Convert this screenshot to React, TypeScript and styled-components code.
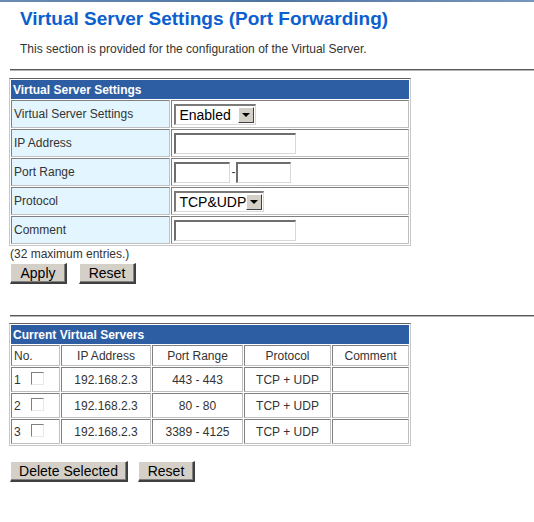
import React from "react";
import styled, { createGlobalStyle } from "styled-components";

const Global = createGlobalStyle`
  html, body { margin: 0; padding: 0; background: #fff; }
  body { font-family: "Liberation Sans", Arial, sans-serif; font-size: 12px; color: #333; }
`;

const TopStrip = styled.div`
  height: 2px;
  background: linear-gradient(90deg, #6a8cb4, #4f74a2 50%, #7896bb);
`;

const Page = styled.div`
  padding: 0 0 0 10px;
`;

const Title = styled.h1`
  margin: 6px 0 0 10px;
  font-size: 19px;
  line-height: 22px;
  font-weight: bold;
  color: #0b5fcf;
`;

const Intro = styled.p`
  margin: 12px 0 0 10px;
  font-size: 12px;
  line-height: 14px;
  color: #333;
`;

const Rule = styled.div<{ $top: number }>`
  margin-top: ${(p) => p.$top}px;
  height: 0;
  border-top: 1px solid #5a5a5a;
  border-bottom: 1px solid #b4b4b4;
`;

const Table = styled.table<{ $top: number }>`
  margin-top: ${(p) => p.$top}px;
  margin-left: -1px;
  width: 402px;
  table-layout: fixed;
  border-collapse: separate;
  border-spacing: 1px;
  border-top: 1px solid #606060;
  border-right: 1px solid #c8c8c8;
  border-bottom: 1px solid #c8c8c8;
  border-left: 1px solid #c8c8c8;
`;

const Col = styled.col<{ $w: number }>`
  width: ${(p) => p.$w}px;
`;

const HeadCell = styled.th`
  background: #2d5ea3;
  color: #fff;
  font-weight: bold;
  font-size: 12px;
  text-align: left;
  height: 19px;
  padding: 0 2px;
`;

const Cell = styled.td<{ $label?: boolean; $align?: string; $h: number }>`
  background: ${(p) => (p.$label ? "#e3f5fe" : "#fff")};
  border-top: 1px solid #808080;
  border-left: 1px solid #808080;
  border-right: 1px solid #c0c0c0;
  border-bottom: 1px solid #c0c0c0;
  height: ${(p) => p.$h}px;
  padding: 0 2px;
  font-size: 12px;
  color: #333;
  text-align: ${(p) => p.$align || "left"};
  vertical-align: middle;
  box-sizing: border-box;
  white-space: nowrap;
`;

const Select = styled.span<{ $w: number }>`
  display: inline-flex;
  align-items: center;
  box-sizing: border-box;
  width: ${(p) => p.$w}px;
  height: 21px;
  border-top: 2px solid #7a7a7a;
  border-left: 2px solid #7a7a7a;
  border-right: 1px solid #d8d8d8;
  border-bottom: 1px solid #d8d8d8;
  background: #fff;
  font-size: 14px;
  color: #000;
  padding-left: 3px;
  vertical-align: middle;
`;

const SelectText = styled.span`
  flex: 1;
  white-space: nowrap;
`;

const Arrow = styled.span`
  width: 16px;
  height: 16px;
  margin-right: 1px;
  box-sizing: border-box;
  background: #d4d0c8;
  border-top: 1px solid #fff;
  border-left: 1px solid #fff;
  border-right: 1px solid #404040;
  border-bottom: 1px solid #404040;
  display: flex;
  align-items: center;
  justify-content: center;
  flex: none;
  &::after {
    content: "";
    border-left: 4px solid transparent;
    border-right: 4px solid transparent;
    border-top: 4px solid #000;
  }
`;

const TextBox = styled.span<{ $w: number }>`
  display: inline-block;
  box-sizing: border-box;
  width: ${(p) => p.$w}px;
  height: 21px;
  border-top: 2px solid #6e6e6e;
  border-left: 2px solid #6e6e6e;
  border-right: 1px solid #d8d8d8;
  border-bottom: 1px solid #d8d8d8;
  background: #fff;
  vertical-align: middle;
`;

const Dash = styled.span`
  display: inline-block;
  width: 6px;
  text-align: center;
  vertical-align: middle;
  color: #333;
`;

const Note = styled.div`
  margin-top: 1px;
  font-size: 12px;
  line-height: 14px;
  color: #333;
`;

const ButtonRow = styled.div<{ $top: number; $gap: number }>`
  display: flex;
  gap: ${(p) => p.$gap}px;
  margin-top: ${(p) => p.$top}px;
`;

const Button = styled.button<{ $w: number }>`
  box-sizing: border-box;
  width: ${(p) => p.$w}px;
  height: 21px;
  padding: 0;
  background: #d4d0c8;
  font-family: "Liberation Sans", Arial, sans-serif;
  font-size: 14px;
  color: #000;
  border-top: 1px solid #fff;
  border-left: 1px solid #fff;
  border-right: 2px solid #404040;
  border-bottom: 2px solid #404040;
  box-shadow: inset -1px -1px 0 #808080;
`;

const Check = styled.span`
  display: inline-block;
  box-sizing: border-box;
  width: 13px;
  height: 13px;
  margin-left: 10px;
  border-top: 1px solid #808080;
  border-left: 1px solid #808080;
  border-right: 1px solid #e8e8e8;
  border-bottom: 1px solid #e8e8e8;
  background: #fff;
  vertical-align: -1px;
`;

const rows = [
  { n: 1, ip: "192.168.2.3", port: "443 - 443", proto: "TCP + UDP" },
  { n: 2, ip: "192.168.2.3", port: "80 - 80", proto: "TCP + UDP" },
  { n: 3, ip: "192.168.2.3", port: "3389 - 4125", proto: "TCP + UDP" },
];

export default function App() {
  return (
    <>
      <Global />
      <TopStrip />
      <Page>
        <Title>Virtual Server Settings (Port Forwarding)</Title>
        <Intro>This section is provided for the configuration of the Virtual Server.</Intro>
        <Rule $top={13} />
        <Table $top={7}>
          <colgroup>
            <Col $w={159} />
            <Col $w={237} />
          </colgroup>
          <tbody>
            <tr>
              <HeadCell colSpan={2}>Virtual Server Settings</HeadCell>
            </tr>
            <tr>
              <Cell $label $h={28}>Virtual Server Settings</Cell>
              <Cell $h={28}>
                <Select $w={82}>
                  <SelectText>Enabled</SelectText>
                  <Arrow />
                </Select>
              </Cell>
            </tr>
            <tr>
              <Cell $label $h={28}>IP Address</Cell>
              <Cell $h={28}>
                <TextBox $w={122} />
              </Cell>
            </tr>
            <tr>
              <Cell $label $h={28}>Port Range</Cell>
              <Cell $h={28}>
                <TextBox $w={56} />
                <Dash>-</Dash>
                <TextBox $w={55} />
              </Cell>
            </tr>
            <tr>
              <Cell $label $h={28}>Protocol</Cell>
              <Cell $h={28}>
                <Select $w={90}>
                  <SelectText>TCP&amp;UDP</SelectText>
                  <Arrow />
                </Select>
              </Cell>
            </tr>
            <tr>
              <Cell $label $h={28}>Comment</Cell>
              <Cell $h={28}>
                <TextBox $w={122} />
              </Cell>
            </tr>
          </tbody>
        </Table>
        <Note>(32 maximum entries.)</Note>
        <ButtonRow $top={2} $gap={12}>
          <Button $w={57}>Apply</Button>
          <Button $w={57}>Reset</Button>
        </ButtonRow>
        <Rule $top={31} />
        <Table $top={6}>
          <colgroup>
            <Col $w={49} />
            <Col $w={90} />
            <Col $w={91} />
            <Col $w={87} />
            <Col $w={77} />
          </colgroup>
          <tbody>
            <tr>
              <HeadCell colSpan={5}>Current Virtual Servers</HeadCell>
            </tr>
            <tr>
              <Cell $h={21}>No.</Cell>
              <Cell $h={21} $align="center">IP Address</Cell>
              <Cell $h={21} $align="center">Port Range</Cell>
              <Cell $h={21} $align="center">Protocol</Cell>
              <Cell $h={21} $align="center">Comment</Cell>
            </tr>
            {rows.map((r) => (
              <tr key={r.n}>
                <Cell $h={25}>
                  {r.n}
                  <Check />
                </Cell>
                <Cell $h={25} $align="center">{r.ip}</Cell>
                <Cell $h={25} $align="center">{r.port}</Cell>
                <Cell $h={25} $align="center">{r.proto}</Cell>
                <Cell $h={25} />
              </tr>
            ))}
          </tbody>
        </Table>
        <ButtonRow $top={15} $gap={10}>
          <Button $w={118}>Delete Selected</Button>
          <Button $w={57}>Reset</Button>
        </ButtonRow>
      </Page>
    </>
  );
}
